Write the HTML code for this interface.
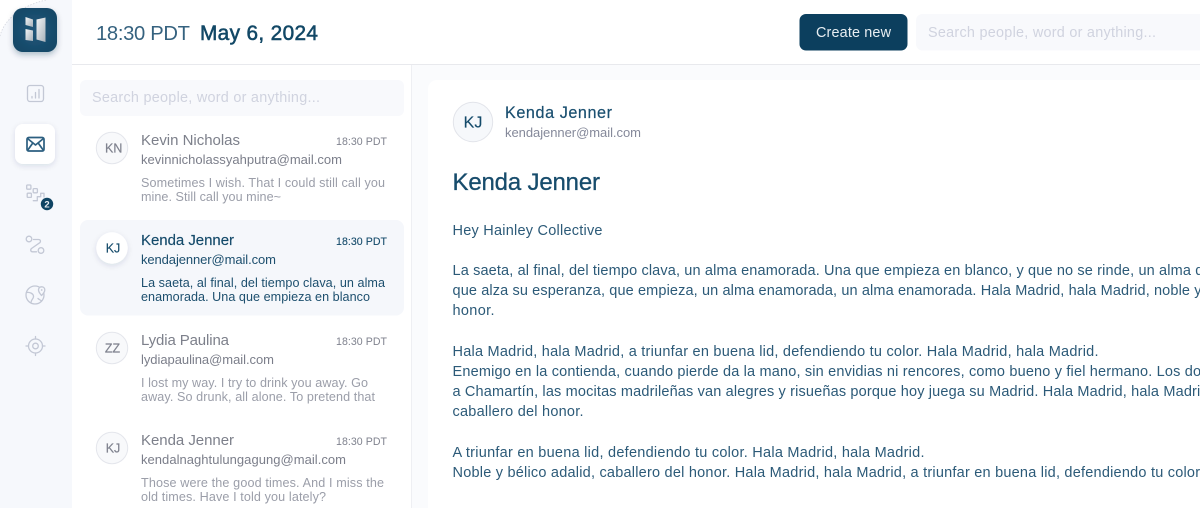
<!DOCTYPE html>
<html lang="en">
<head>
<meta charset="utf-8">
<title>Inbox</title>
<style>
html,body{margin:0;padding:0;width:1200px;height:508px;overflow:hidden;background:#fff}
svg{display:block;filter:blur(.35px)}
text{font-family:"Liberation Sans",sans-serif;white-space:pre}
.n{font-size:15px;fill:#7d808b}
.e{font-size:13px;fill:#7b7e8a}
.m{font-size:12.6px;fill:#9b9ea9}
.t{font-size:10.6px;fill:#7f828e}
.a{font-size:12.5px;fill:#7f828e;text-anchor:middle;stroke:#7f828e;stroke-width:.2}
.s .n,.s .a{fill:#144a6a;stroke:#144a6a;stroke-width:.15}
.s .t{fill:#144a6a;stroke:#144a6a;stroke-width:.1}
.s .e,.s .m{fill:#1d4f6e}
.b{font-size:14.5px;fill:#2c5a78}
.p{font-size:14.4px;fill:#d0d3df}
</style>
</head>
<body>
<svg width="1200" height="508" viewBox="0 0 1200 508" xmlns="http://www.w3.org/2000/svg">
<defs>
<radialGradient id="lg" cx=".5" cy=".5" r=".7"><stop offset="0" stop-color="#24587a"/><stop offset="1" stop-color="#0f4463"/></radialGradient>
<linearGradient id="lw" x1="0" y1="0" x2="1" y2="1"><stop offset="0" stop-color="#f4f5f6"/><stop offset="1" stop-color="#a8b2bb"/></linearGradient>
<filter id="sh" x="-40%" y="-40%" width="180%" height="180%"><feDropShadow dx="0" dy="2" stdDeviation="3" flood-color="#18305a" flood-opacity=".12"/></filter>
<filter id="sh2" x="-40%" y="-40%" width="180%" height="180%"><feDropShadow dx="0" dy="3" stdDeviation="3" flood-color="#10304a" flood-opacity=".28"/></filter>
<clipPath id="cv"><rect width="1200" height="508"/></clipPath>
</defs>

<rect width="1200" height="508" fill="#fff"/>
<rect x="0" y="0" width="72" height="508" fill="#f6f8fc"/>
<path d="M0 0H46C20 6 4 20 0 36Z" fill="#fff"/>
<path d="M46 0C20 6 4 20 0 36" fill="none" stroke="#d4d7df" stroke-width=".8" stroke-dasharray="1.500 1.500"/>
<rect x="412" y="65" width="788" height="443" fill="#fafbfd"/>
<rect x="428" y="80" width="790" height="450" rx="9" fill="#fff"/>
<rect x="411" y="65" width="1" height="443" fill="#eeeff3"/>
<rect x="72" y="64" width="1128" height="1" fill="#e8e9ed"/>

<!-- logo -->
<rect x="13" y="8" width="44" height="44" rx="10" fill="url(#lg)" filter="url(#sh2)"/>
<path d="M25.500 17L33 19.500V27L25.500 25Z" fill="url(#lw)"/>
<path d="M25.500 29L33 30.500V41L25.500 40Z" fill="url(#lw)"/>
<path d="M36.500 19.500L45.500 17.500V42L36.500 39.500Z" fill="url(#lw)"/>

<!-- nav icons -->
<g fill="none" stroke="#c3c8d5" stroke-width="1.300" stroke-linecap="round" stroke-linejoin="round">
<rect x="27.500" y="85.500" width="16" height="16" rx="2.500"/>
<path d="M32 98V96.500M35.500 98V92.500M39 98V89.500"/>
<rect x="26.700" y="185" width="4.200" height="4.200" rx=".8"/>
<rect x="33.200" y="188.600" width="4.200" height="4.200" rx=".8"/>
<rect x="27.200" y="193.200" width="4.200" height="4.200" rx=".8"/>
<path d="M33.300 200.700H37.300V196.700H40.700V193.300H44V197"/>
<circle cx="29" cy="239" r="2.800"/>
<circle cx="41" cy="250.500" r="2.800"/>
<path d="M33.500 239.500H38.500C40.500 239.500 41 241.500 39.800 242.700L31.500 248.500C30 249.800 30.800 251.800 32.500 251.800H36.500"/>
<circle cx="35" cy="295" r="9"/>
<path d="M26.500 292.500C30 292 33 293.500 33.500 296C34 298.500 31 299.500 31 302.500"/>
<path d="M38 298.500C39 299.500 40.500 300 41.500 301"/>
<path d="M41.500 295.500C39.500 293 38.300 291.500 38.500 289.500C38.800 287.500 40.500 286.800 41.700 286.800C43.300 286.800 44.800 288 44.800 290C44.800 291.800 43 294 41.500 295.500Z" fill="#f6f8fc"/>
<circle cx="41.700" cy="290" r=".9" fill="#c3c8d5" stroke="none"/>
<circle cx="35.500" cy="346" r="7"/>
<circle cx="35.500" cy="346" r="2.800"/>
<path d="M35.500 336.500V339M35.500 353V355.500M26 346H28.500M42.500 346H45"/>
</g>
<circle cx="47" cy="204" r="6.200" fill="#0f4463"/>
<text x="47" y="207.500" text-anchor="middle" style="font-size:9.500px;font-weight:bold;fill:#e8edf2">2</text>

<rect x="15" y="124" width="40" height="40" rx="8" fill="#fff" filter="url(#sh)"/>
<g fill="none" stroke="#2c5f80" stroke-width="1.700" stroke-linejoin="round">
<rect x="27" y="137.500" width="17" height="13.500" rx="1.800"/>
<path d="M27.500 138.500L35.500 145L43.500 138.500M27.500 150.500L32.800 143M43.500 150.500L38.200 143"/>
</g>

<!-- header -->
<text x="96" y="40" textLength="94" style="font-size:20.200px;fill:#35627f">18:30 PDT</text>
<text x="200" y="40" textLength="118" style="font-size:20.800px;fill:#124866;stroke:#124866;stroke-width:.55">May 6, 2024</text>
<rect x="799.500" y="14" width="108" height="36.500" rx="6.500" fill="#0c3f5e"/>
<text x="816" y="37" textLength="75" style="font-size:14.400px;fill:#e8eef2">Create new</text>
<rect x="916" y="14" width="300" height="36.500" rx="6.500" fill="#f8f9fc"/>
<text class="p" x="928" y="37" textLength="228">Search people, word or anything...</text>

<!-- list -->
<rect x="80" y="80" width="324" height="36" rx="6" fill="#f8f9fc"/>
<text class="p" x="92" y="102" textLength="228">Search people, word or anything...</text>

<g>
<circle cx="112" cy="148" r="15.700" fill="#f8f9fb" stroke="#e4e6ec" stroke-width="1"/>
<text class="a" x="113.700" y="152.500">KN</text>
<text class="n" x="141" y="145" textLength="99">Kevin Nicholas</text>
<text class="t" x="336" y="145" textLength="51">18:30 PDT</text>
<text class="e" x="141" y="164" textLength="201">kevinnicholassyahputra@mail.com</text>
<text class="m" x="141" y="187" textLength="244">Sometimes I wish. That I could still call you</text>
<text class="m" x="141" y="201" textLength="140">mine. Still call you mine~</text>
</g>

<rect x="80" y="220" width="324" height="95.500" rx="8" fill="#f5f7fb"/>
<g class="s">
<circle cx="112" cy="248" r="15.700" fill="#fff" filter="url(#sh)"/>
<text class="a" x="113" y="252.500">KJ</text>
<text class="n" x="141" y="245" textLength="93">Kenda Jenner</text>
<text class="t" x="336" y="245" textLength="51">18:30 PDT</text>
<text class="e" x="141" y="264" textLength="135">kendajenner@mail.com</text>
<text class="m" x="141" y="287" textLength="244">La saeta, al final, del tiempo clava, un alma</text>
<text class="m" x="141" y="301" textLength="229">enamorada. Una que empieza en blanco</text>
</g>

<g>
<circle cx="112" cy="348" r="15.700" fill="#f8f9fb" stroke="#e4e6ec" stroke-width="1"/>
<text class="a" x="112.500" y="352.500">ZZ</text>
<text class="n" x="141" y="345" textLength="88">Lydia Paulina</text>
<text class="t" x="336" y="345" textLength="51">18:30 PDT</text>
<text class="e" x="141" y="364" textLength="133">lydiapaulina@mail.com</text>
<text class="m" x="141" y="387" textLength="227">I lost my way. I try to drink you away. Go</text>
<text class="m" x="141" y="401" textLength="234">away. So drunk, all alone. To pretend that</text>
</g>

<g>
<circle cx="112" cy="448" r="15.700" fill="#f8f9fb" stroke="#e4e6ec" stroke-width="1"/>
<text class="a" x="113" y="452.500">KJ</text>
<text class="n" x="141" y="445" textLength="93">Kenda Jenner</text>
<text class="t" x="336" y="445" textLength="51">18:30 PDT</text>
<text class="e" x="141" y="464" textLength="205">kendalnaghtulungagung@mail.com</text>
<text class="m" x="141" y="487" textLength="243">Those were the good times. And I miss the</text>
<text class="m" x="141" y="501" textLength="185">old times. Have I told you lately?</text>
</g>

<!-- message -->
<circle cx="473" cy="122" r="19.700" fill="#f6f8fb" stroke="#e2e4ea" stroke-width="1"/>
<text x="473" y="127.500" text-anchor="middle" style="font-size:16px;fill:#144a6a;stroke:#144a6a;stroke-width:.15">KJ</text>
<text x="505" y="118" textLength="107" style="font-size:16.200px;fill:#1a4f70;stroke:#1a4f70;stroke-width:.2">Kenda Jenner</text>
<text x="505" y="137" textLength="136" style="font-size:13px;fill:#85899a">kendajenner@mail.com</text>
<text x="452.500" y="190" textLength="147.500" style="font-size:24px;fill:#174c6c;stroke:#174c6c;stroke-width:.3">Kenda Jenner</text>

<g class="body" clip-path="url(#cv)">
<text class="b" x="452.500" y="235" textLength="150">Hey Hainley Collective</text>
<text class="b" x="452.500" y="275" textLength="759">La saeta, al final, del tiempo clava, un alma enamorada. Una que empieza en blanco, y que no se rinde, un alma de</text>
<text class="b" x="452.500" y="295" textLength="749">que alza su esperanza, que empieza, un alma enamorada, un alma enamorada. Hala Madrid, hala Madrid, noble y</text>
<text class="b" x="452.500" y="315" textLength="42">honor.</text>
<text class="b" x="452.500" y="356" textLength="646">Hala Madrid, hala Madrid, a triunfar en buena lid, defendiendo tu color. Hala Madrid, hala Madrid.</text>
<text class="b" x="452.500" y="376" textLength="756">Enemigo en la contienda, cuando pierde da la mano, sin envidias ni rencores, como bueno y fiel hermano. Los dos</text>
<text class="b" x="452.500" y="396" textLength="756">a Chamartín, las mocitas madrileñas van alegres y risueñas porque hoy juega su Madrid. Hala Madrid, hala Madrid</text>
<text class="b" x="452.500" y="416" textLength="131">caballero del honor.</text>
<text class="b" x="452.500" y="457" textLength="472">A triunfar en buena lid, defendiendo tu color. Hala Madrid, hala Madrid.</text>
<text class="b" x="452.500" y="477" textLength="751">Noble y bélico adalid, caballero del honor. Hala Madrid, hala Madrid, a triunfar en buena lid, defendiendo tu color.</text>
</g>
</svg>
</body>
</html>
